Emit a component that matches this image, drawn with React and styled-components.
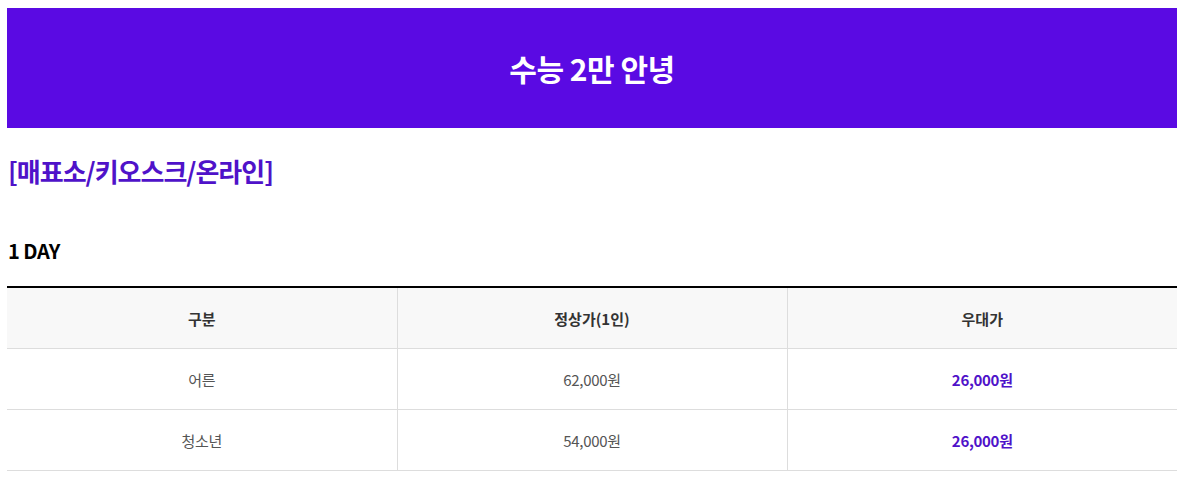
import styled, { createGlobalStyle } from "styled-components";

const GlobalStyle = createGlobalStyle`
  body {
    margin: 0;
    background: #fff;
    font-family: "Noto Sans CJK KR", "Noto Sans", sans-serif;
  }
`;

const Page = styled.div`
  width: 1170px;
  margin: 8px 0 0 7px;
`;

const Banner = styled.div`
  height: 120px;
  background: #5a0ae3;
  display: flex;
  align-items: center;
  justify-content: center;
`;

const BannerTitle = styled.h1`
  margin: 0;
  color: #fff;
  font-size: 30px;
  font-weight: 700;
  letter-spacing: -0.5px;
`;

const SectionTitle = styled.h2`
  margin: 24px 0 0 1px;
  color: #4f12c9;
  font-size: 26px;
  font-weight: 700;
  line-height: 38px;
  letter-spacing: -1px;
`;

const SubTitle = styled.h3`
  margin: 46px 0 0 1px;
  color: #000;
  font-size: 20px;
  font-weight: 700;
  line-height: 30px;
  letter-spacing: -0.5px;
`;

const Table = styled.table`
  width: 100%;
  margin-top: 20px;
  border-collapse: collapse;
  table-layout: fixed;
  border-top: 2px solid #000;
`;

const Th = styled.th`
  height: 60px;
  padding: 0;
  background: #f8f8f8;
  color: #333;
  font-size: 15px;
  font-weight: 700;
  border-bottom: 1px solid #ddd;
  border-left: 1px solid #ddd;
  &:first-child {
    border-left: none;
  }
`;

const Td = styled.td`
  height: 60px;
  padding: 0;
  text-align: center;
  font-size: 15px;
  color: ${(p) => (p.$highlight ? "#4f12c9" : "#555")};
  font-weight: ${(p) => (p.$highlight ? 700 : 400)};
  letter-spacing: -0.3px;
  border-bottom: 1px solid #ddd;
  border-left: 1px solid #ddd;
  &:first-child {
    border-left: none;
  }
`;

const rows = [
  { type: "어른", price: "62,000원", sale: "26,000원" },
  { type: "청소년", price: "54,000원", sale: "26,000원" },
];

export default function App() {
  return (
    <>
      <GlobalStyle />
      <Page>
        <Banner>
          <BannerTitle>수능 2만 안녕</BannerTitle>
        </Banner>
        <SectionTitle>[매표소/키오스크/온라인]</SectionTitle>
        <SubTitle>1 DAY</SubTitle>
        <Table>
          <thead>
            <tr>
              <Th>구분</Th>
              <Th>정상가(1인)</Th>
              <Th>우대가</Th>
            </tr>
          </thead>
          <tbody>
            {rows.map((r) => (
              <tr key={r.type}>
                <Td>{r.type}</Td>
                <Td>{r.price}</Td>
                <Td $highlight>{r.sale}</Td>
              </tr>
            ))}
          </tbody>
        </Table>
      </Page>
    </>
  );
}
